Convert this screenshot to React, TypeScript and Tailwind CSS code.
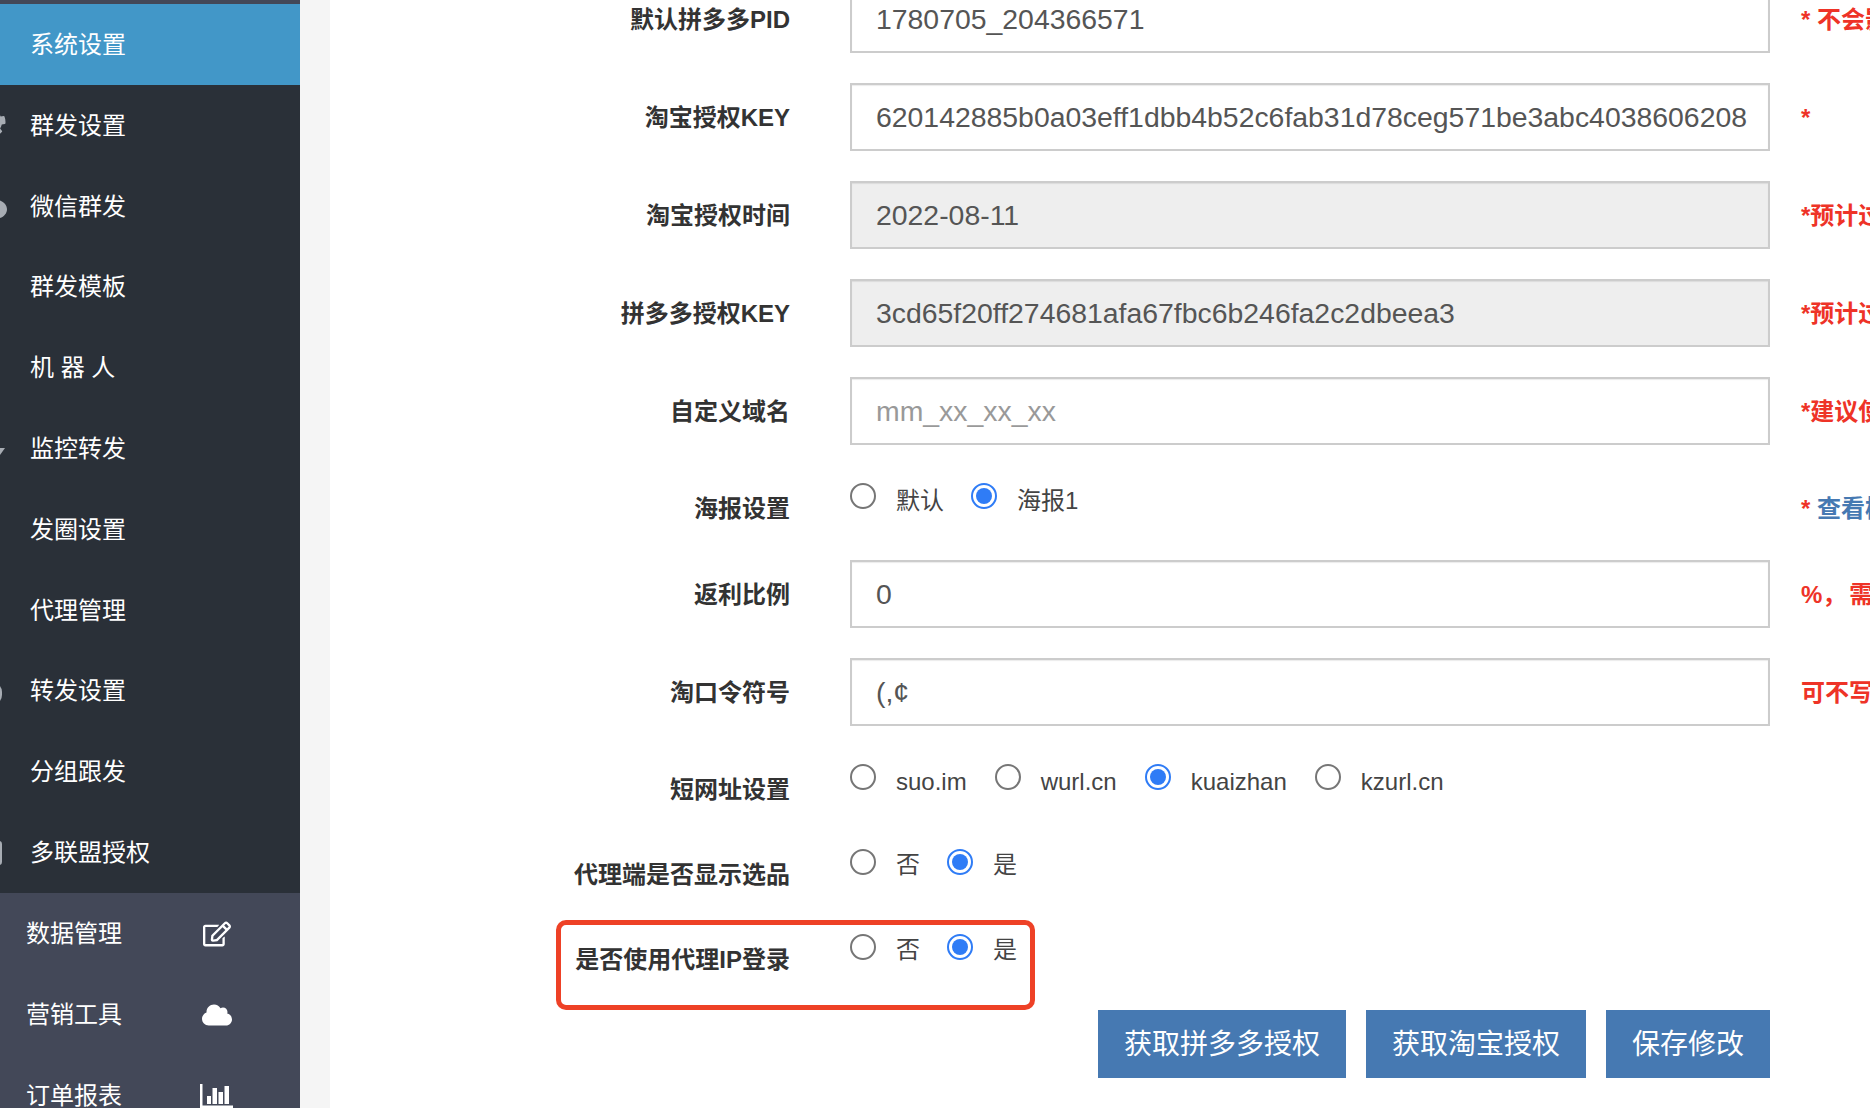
import type { ReactNode } from "react";
import { FaCloud, FaCog, FaComment, FaRegEdit } from "react-icons/fa";

const font = { fontFamily: '"Liberation Sans", "Noto Sans CJK SC", sans-serif' };

const navItems: { label: string; icon?: ReactNode }[] = [
  { label: "群发设置", icon: <FaCog className="absolute -left-[26px] top-[21px] rotate-[22deg] text-[32px] text-[#a7acb3]" /> },
  { label: "微信群发", icon: <FaComment className="absolute -left-[17px] top-[32px] text-[24px] text-[#a7acb3]" /> },
  { label: "群发模板" },
  { label: "机 器 人" },
  {
    label: "监控转发",
    icon: (
      <svg className="absolute left-0 top-[40px] h-[7px] w-[5px] text-[#a7acb3]" viewBox="0 0 5 7">
        <polygon points="0,0 5,0 0,7" fill="currentColor" />
      </svg>
    ),
  },
  { label: "发圈设置" },
  { label: "代理管理" },
  { label: "转发设置", icon: <span className="absolute -left-[18px] top-[31px] h-[23px] w-[20px] rounded-full bg-[#a7acb3]" /> },
  { label: "分组跟发" },
  { label: "多联盟授权", icon: <span className="absolute -left-[10px] top-[29px] h-[24px] w-[12px] rounded-[3px] bg-[#a7acb3]" /> },
];

function ChartIcon() {
  return (
    <svg className="h-[24px] w-[33px]" viewBox="0 0 33 24" fill="currentColor">
      <path d="M0 0h2.5v21.500H33V24H0z" />
      <rect x="7" y="12" width="4" height="8" />
      <rect x="12.500" y="4" width="4.500" height="16" />
      <rect x="18.500" y="8" width="4.500" height="12" />
      <rect x="24.500" y="2" width="4.500" height="18" />
    </svg>
  );
}

const groups = [
  { label: "数据管理", icon: <FaRegEdit className="text-[28px]" /> },
  { label: "营销工具", icon: <FaCloud className="text-[30px]" /> },
  { label: "订单报表", icon: <ChartIcon /> },
];

function Sidebar() {
  return (
    <aside className="w-[300px] shrink-0 overflow-hidden bg-[#434858] text-[24px] text-white">
      <div className="h-[4px]" />
      <div className="flex h-[81px] items-center bg-[#4297c8] pl-[30px]">系统设置</div>
      <nav className="bg-[#2a3038]">
        {navItems.map((item) => (
          <div key={item.label} className="relative flex h-[80.8px] items-center pl-[30px] pt-[1px]">
            {item.icon}
            {item.label}
          </div>
        ))}
      </nav>
      {groups.map((g) => (
        <div key={g.label} className="flex h-[81px] items-center justify-between pl-[26px] pr-[67px] pt-[1px]">
          <span>{g.label}</span>
          <span className="flex w-[33px] justify-center">{g.icon}</span>
        </div>
      ))}
    </aside>
  );
}

function Label({ children, radio }: { children: ReactNode; radio?: boolean }) {
  return (
    <label className={`w-[460px] shrink-0 text-right text-[24px] leading-[34px] font-bold text-[#333] ${radio ? "pt-[17px]" : "pt-[1px]"}`}>
      {children}
    </label>
  );
}

function Note({ children }: { children?: ReactNode }) {
  return <div className="ml-[31px] pt-[1px] text-[24px] font-bold whitespace-nowrap text-[#ee3327]">{children}</div>;
}

function InputRow(props: { label: string; value?: string; placeholder?: string; disabled?: boolean; note: ReactNode }) {
  return (
    <div className="mb-[30px] flex items-center gap-[60px]">
      <Label>{props.label}</Label>
      <div className="flex items-center">
        <input
          readOnly
          value={props.value}
          placeholder={props.placeholder}
          className={`h-[68px] w-[920px] shrink-0 border-2 border-[#ccc] pl-[24px] pt-[1px] text-[28.4px] text-[#555] shadow-[inset_0_1px_1px_rgba(0,0,0,0.08)] placeholder:text-[#999] ${
            props.disabled ? "bg-[#eee]" : "bg-white"
          }`}
        />
        <Note>{props.note}</Note>
      </div>
    </div>
  );
}

function Radio({ text, checked, textTop }: { text: string; checked?: boolean; textTop: string }) {
  return (
    <span className="flex items-start">
      <span
        className={`mt-[8px] flex h-[26px] w-[26px] items-center justify-center rounded-full border-2 bg-white ${
          checked ? "border-[#2f7cf6]" : "border-[#767676]"
        }`}
      >
        {checked && <span className="h-[16px] w-[16px] rounded-full bg-[#2f7cf6]" />}
      </span>
      <span className={`ml-[20px] text-[24px] leading-[34px] text-[#444] ${textTop}`}>{text}</span>
    </span>
  );
}

function RadioRow(props: {
  label: string;
  options: { text: string; checked?: boolean }[];
  note?: ReactNode;
  mark?: boolean;
  textTop: string;
  gap?: string;
}) {
  return (
    <div className="relative mb-[30px] flex h-[55px] gap-[60px]">
      <Label radio>{props.label}</Label>
      <div className="flex flex-1 items-start">
        <div className={`flex w-[920px] shrink-0 ${props.gap ?? "gap-[27px]"}`}>
          {props.options.map((o) => (
            <Radio key={o.text} text={o.text} checked={o.checked} textTop={props.textTop} />
          ))}
        </div>
        {props.note && <div className="pt-[15px]"><Note>{props.note}</Note></div>}
      </div>
      {props.mark && (
        <div className="pointer-events-none absolute -top-[6px] left-[226px] h-[90px] w-[479px] rounded-[10px] border-[5px] border-[#ee4126]" />
      )}
    </div>
  );
}

const yesNo = [{ text: "否" }, { text: "是", checked: true }];

export default function App() {
  return (
    <div style={font} className="flex h-[1108px] overflow-hidden bg-[#f5f5f5]">
      <Sidebar />
      <main className="ml-[30px] flex-1 overflow-hidden bg-white">
        <div className="-mt-[15px]">
          <InputRow label="默认拼多多PID" value="1780705_204366571" note="* 不会影响" />
          <InputRow label="淘宝授权KEY" value="620142885b0a03eff1dbb4b52c6fab31d78ceg571be3abc4038606208" note="*" />
          <InputRow label="淘宝授权时间" value="2022-08-11" disabled note="*预计过期" />
          <InputRow label="拼多多授权KEY" value="3cd65f20ff274681afa67fbc6b246fa2c2dbeea3" disabled note="*预计过期" />
          <InputRow label="自定义域名" placeholder="mm_xx_xx_xx" note="*建议使用" />
          <RadioRow
            label="海报设置"
            options={[{ text: "默认" }, { text: "海报1", checked: true }]}
            textTop="pt-[9px]"
            note={
              <>
                * <span className="text-[#4679b2]">查看模板</span>
              </>
            }
          />
          <InputRow label="返利比例" value="0" note={<>%，<span className="ml-[3px]">需要</span></>} />
          <InputRow label="淘口令符号" value="(,¢" note="可不写" />
          <RadioRow
            label="短网址设置"
            textTop="pt-[9px]"
            gap="gap-[28px]"
            options={[{ text: "suo.im" }, { text: "wurl.cn" }, { text: "kuaizhan", checked: true }, { text: "kzurl.cn" }]}
          />
          <RadioRow label="代理端是否显示选品" options={yesNo} textTop="pt-[7px]" />
          <RadioRow label="是否使用代理IP登录" options={yesNo} textTop="pt-[7px]" mark />
          <div className="-mt-px flex w-[1440px] justify-end gap-[20px]">
            {["获取拼多多授权", "获取淘宝授权", "保存修改"].map((b) => (
              <button key={b} type="button" className="h-[68px] bg-[#4679b2] px-[26px] pt-[2px] text-[28px] text-white">
                {b}
              </button>
            ))}
          </div>
        </div>
      </main>
    </div>
  );
}
